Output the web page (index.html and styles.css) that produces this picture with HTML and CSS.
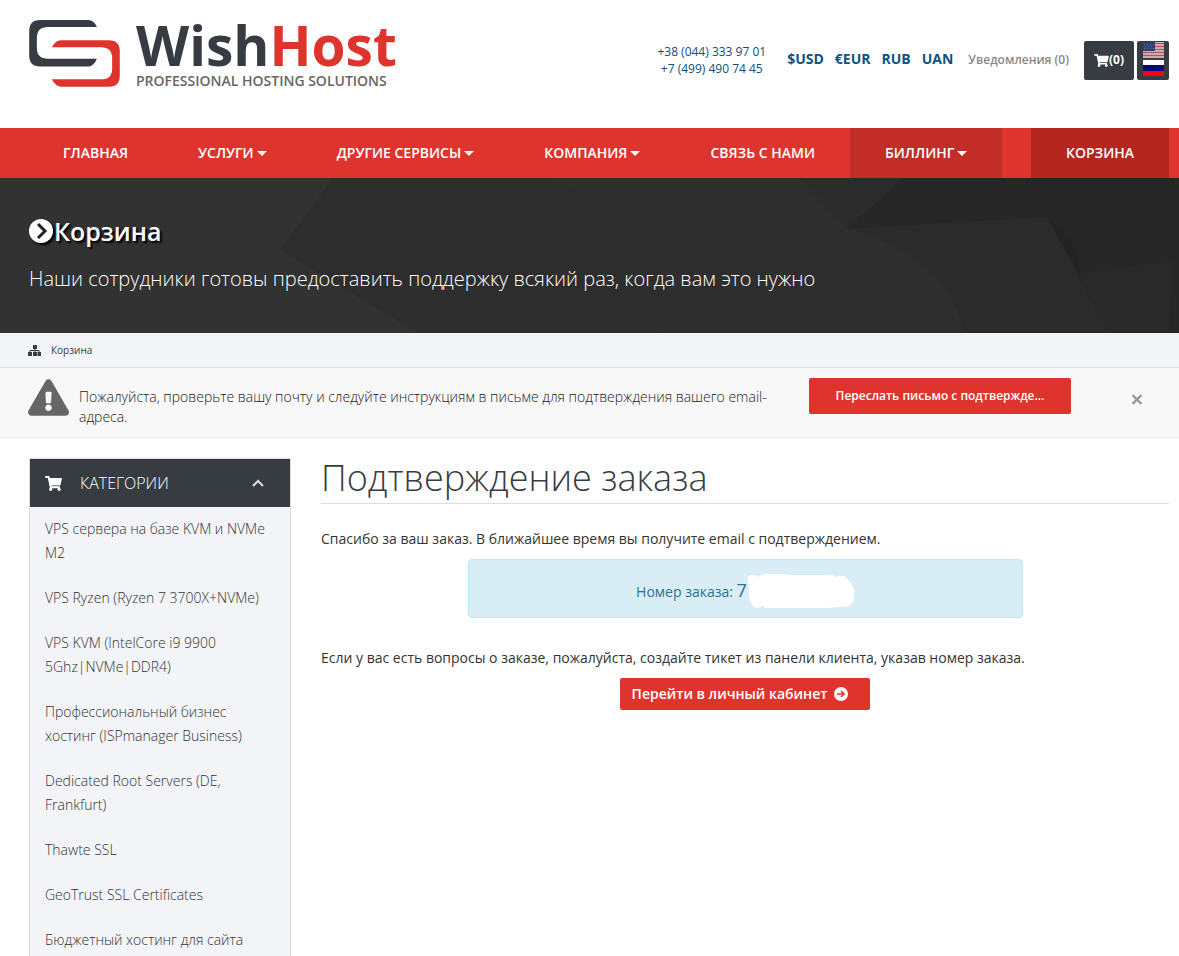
FILE: index.html
```
<!DOCTYPE html>
<html lang="ru">
<head>
  <meta charset="UTF-8">
  <meta name="viewport" content="width=device-width, initial-scale=1.0">
  <title>WishHost - Корзина</title>
  <link rel="stylesheet" href="styles.css">
</head>
<body>
  <!-- icons -->
  <svg class="sprite" aria-hidden="true">
    <symbol id="cart" viewBox="0 0 576 512"><path d="M528.12 301.319l47.273-208C578.806 78.301 567.391 64 551.99 64H159.208l-9.166-44.81C147.758 8.021 137.93 0 126.529 0H24C10.745 0 0 10.745 0 24v16c0 13.255 10.745 24 24 24h69.883l70.248 343.435C147.325 417.1 136 435.222 136 456c0 30.928 25.072 56 56 56s56-25.072 56-56c0-15.674-6.447-29.835-16.824-40h209.647C430.447 426.165 424 440.326 424 456c0 30.928 25.072 56 56 56s56-25.072 56-56c0-22.172-12.888-41.332-31.579-50.405l5.517-24.276c3.413-15.018-8.002-29.319-23.403-29.319H218.117l-6.545-32h293.145c11.206 0 20.92-7.754 23.403-18.681z"/></symbol>
  </svg>

  <header class="header">
    <a class="logo" href="#">
      <svg class="logo-mark" viewBox="27 30 273 202" aria-hidden="true">
        <path fill="#373b42" d="M231 51Q222 30 205 30H60Q27 30 27 63V137Q27 170 60 170H205Q222 170 231 147H83Q50 147 50 114V84Q50 51 83 51Z"/>
        <path fill="#df342d" d="M95 112Q107 91 122 91H267Q300 91 300 124V198Q300 231 267 231H122Q107 231 95 209H244Q277 209 277 176V145Q277 112 244 112Z"/>
      </svg>
      <span class="logo-text">
        <span class="logo-name">Wish<span class="logo-host">Host</span></span>
        <span class="logo-slogan">PROFESSIONAL HOSTING SOLUTIONS</span>
      </span>
    </a>
    <div class="phones">
      <a href="tel:+380443339701">+38 (044) 333 97 01</a>
      <a href="tel:+74994907445">+7 (499) 490 74 45</a>
    </div>
    <div class="currency">
      <a href="#">$USD</a>
      <a href="#">€EUR</a>
      <a href="#">RUB</a>
      <a href="#">UAN</a>
    </div>
    <a class="notices" href="#">Уведомления (0)</a>
    <div class="tools">
      <a class="tool cart-btn" href="#"><svg class="cart-icon" aria-hidden="true"><use href="#cart"/></svg>(0)</a>
      <div class="tool langs">
        <a href="#" aria-label="English">
          <svg class="flag" viewBox="0 0 21 16" aria-hidden="true">
            <path fill="#c9aeb1" d="M0 0h21v16H0z"/>
            <path stroke="#b5525c" d="M0 1.500h21M0 4.500h21M0 7.500h21M0 10.500h21M0 13.500h21"/>
            <path fill="#2c4270" d="M0 0h12v9H0z"/>
            <path stroke="#64759c" stroke-dasharray="1 2" d="M1 2.500h10M2 4.500h9M1 6.500h10"/>
          </svg>
        </a>
        <a href="#" aria-label="Русский">
          <svg class="flag" viewBox="0 0 21 16" aria-hidden="true">
            <path fill="#fff" d="M0 0h21v5H0z"/>
            <path fill="#000c7e" d="M0 5h21v6H0z"/>
            <path fill="#fd0012" d="M0 11h21v5H0z"/>
          </svg>
        </a>
      </div>
    </div>
  </header>

  <nav class="nav">
    <a href="#">ГЛАВНАЯ</a>
    <a class="drop" href="#">УСЛУГИ</a>
    <a class="drop" href="#">ДРУГИЕ СЕРВИСЫ</a>
    <a class="drop" href="#">КОМПАНИЯ</a>
    <a href="#">СВЯЗЬ С НАМИ</a>
    <a class="drop billing" href="#">БИЛЛИНГ</a>
    <a class="basket" href="#">КОРЗИНА</a>
  </nav>

  <section class="banner">
    <svg class="banner-bg" viewBox="0 0 1179 155" preserveAspectRatio="none" aria-hidden="true">
      <path fill="#2d2d2d" d="M333 0L280 72L418 155H661L590 28L582 14L549 0Z"/>
      <path fill="#2e2e2e" d="M549 0L582 14L590 28L661 155H964Q950 80 846 51L800 0Z"/>
      <path fill="#2b2b2b" d="M800 0L846 51L904 0Z"/>
      <path fill="#2b2b2b" d="M846 51Q950 80 964 155H1109L1047 39Z"/>
      <path fill="#262626" d="M904 0L846 51L1047 39L1109 155H1179V0Z"/>
      <path fill="#232323" d="M1047 39Q1082 68 1079 95Z"/>
      <path fill="#292929" d="M1079 95L1171 83L1169 155H1109Z"/>
    </svg>
    <h2 class="banner-title">
      <svg class="banner-icon" viewBox="0 0 24 24" aria-hidden="true">
        <circle cx="12" cy="12" r="12" fill="#fff"/>
        <path d="M9 5l7 7-7 7" fill="none" stroke="#222" stroke-width="3"/>
      </svg>Корзина
    </h2>
    <p class="banner-text">Наши сотрудники готовы предоставить поддержку всякий раз, когда вам это нужно</p>
  </section>

  <div class="crumbs">
    <svg class="sitemap" viewBox="0 0 13 11" aria-hidden="true">
      <path fill="#373b42" d="M5 0h4v4H5zM0 7h4v4H0zM5 7h4v4H5zM9.500 7h3.500v4H9.500z"/>
      <path fill="none" stroke="#373b42" d="M2 7V5.500h9V7M7 3v5"/>
    </svg>
    <a href="#">Корзина</a>
  </div>

  <div class="verify">
    <svg class="warn" viewBox="0 0 576 512" aria-hidden="true"><path fill="#666" d="M569.517 440.013C587.975 472.007 564.806 512 527.94 512H48.054c-36.937 0-59.999-40.055-41.577-71.987L246.423 23.985c18.467-32.009 64.72-31.951 83.154 0l239.94 416.028zM288 354c-25.405 0-46 20.595-46 46s20.595 46 46 46 46-20.595 46-46-20.595-46-46-46zm-43.673-165.346l7.418 136c.347 6.364 5.609 11.346 11.982 11.346h48.546c6.373 0 11.635-4.982 11.982-11.346l7.418-136c.375-6.874-5.098-12.654-11.982-12.654h-57.383c-6.884 0-12.356 5.78-11.981 12.654z"/></svg>
    <p class="verify-text">Пожалуйста, проверьте вашу почту и следуйте инструкциям в письме для подтверждения вашего email-адреса.</p>
    <button class="resend" type="button">Переслать письмо с подтвержде...</button>
    <button class="close" type="button" aria-label="Закрыть">
      <svg viewBox="0 0 10 10" aria-hidden="true"><path d="M1 1l8 8M9 1l-8 8" stroke="#999" stroke-width="2"/></svg>
    </button>
  </div>

  <div class="content">
    <aside class="sidebar">
      <h3 class="sidebar-head">
        <svg class="sidebar-cart" aria-hidden="true"><use href="#cart"/></svg>
        КАТЕГОРИИ
        <svg class="chevron" viewBox="0 0 12 8" aria-hidden="true"><path d="M1 7l5-5 5 5" fill="none" stroke="#ddd" stroke-width="2"/></svg>
      </h3>
      <ul class="cats">
        <li><a href="#">VPS сервера на базе KVM и NVMe M2</a></li>
        <li><a href="#">VPS Ryzen (Ryzen 7 3700X+NVMe)</a></li>
        <li><a href="#">VPS KVM (IntelCore i9 9900 5Ghz|NVMe|DDR4)</a></li>
        <li><a href="#">Профессиональный бизнес хостинг (ISPmanager Business)</a></li>
        <li><a href="#">Dedicated Root Servers (DE, Frankfurt)</a></li>
        <li><a href="#">Thawte SSL</a></li>
        <li><a href="#">GeoTrust SSL Certificates</a></li>
        <li><a href="#">Бюджетный хостинг для сайта</a></li>
      </ul>
    </aside>

    <main class="main">
      <h1>Подтверждение заказа</h1>
      <p>Спасибо за ваш заказ. В ближайшее время вы получите email с подтверждением.</p>
      <div class="order">
        <span>Номер заказа: <span class="order-num">7</span></span>
        <svg class="blot" viewBox="0 0 107 34" aria-hidden="true"><path fill="#fff" d="M1 8Q-1 2 5 1Q9 1 12 3Q14 0 18 0H36L42 1H82Q87 1 90 3Q96 0 100 4Q103 8 107 15V24Q106 34 93 33L80 34H18L16 32Q8 37 4 29Q2 26 2 17Z"/></svg>
      </div>
      <p>Если у вас есть вопросы о заказе, пожалуйста, создайте тикет из панели клиента, указав номер заказа.</p>
      <a class="cabinet" href="#">Перейти в личный кабинет
        <svg class="arrow" viewBox="0 0 14 14" aria-hidden="true">
          <circle cx="7" cy="7" r="7" fill="#fff"/>
          <path d="M3 7h7M7 4l3 3-3 3" fill="none" stroke="#df342d" stroke-width="1.500"/>
        </svg>
      </a>
    </main>
  </div>
</body>
</html>
```
FILE: styles.css
```
*{
	box-sizing: border-box;
}
body{
	margin: 0;
	font: 14px/24px "Open Sans", "Noto Sans", sans-serif;
	color: #373b42;
	background-color: #fff;
	height: 100vh;
	overflow: hidden;
}
a{
	color: inherit;
	text-decoration: none;
}
svg{
	display: block;
	flex-shrink: 0;
}
.sprite{
	position: absolute;
	width: 0;
	height: 0;
}

/* header */
.header{
	display: flex;
	align-items: center;
	height: 128px;
	padding: 0 10px 8px 29px;
}
.logo{
	display: flex;
	gap: 16px;
	margin-right: auto;
	padding-bottom: 12px;
}
.logo-mark{
	width: 91px;
	height: 67px;
}
.logo-text{
	display: flex;
	flex-direction: column;
}
.logo-name{
	font-size: 55px;
	font-weight: 700;
	line-height: 50px;
}
.logo-host{
	color: #df342d;
}
.logo-slogan{
	margin-top: 4px;
	font-size: 14px;
	font-weight: 600;
	line-height: 14px;
	color: #666;
}
.phones{
	display: flex;
	flex-direction: column;
	align-items: center;
	margin-right: 21px;
	font-size: 12px;
	line-height: 17px;
	color: #0d4f80;
}
.currency{
	display: flex;
	gap: 11px;
	margin-right: 15px;
	padding-bottom: 2px;
	font-weight: 700;
	color: #0d5384;
}
.notices{
	margin-right: 15px;
	font-size: 12px;
	font-weight: 600;
	color: #888;
}
.tools{
	display: flex;
	gap: 3px;
}
.tool{
	height: 39px;
	background-color: #373b42;
	border-radius: 2px;
}
.cart-btn{
	display: flex;
	align-items: center;
	padding: 0 10px;
	font-size: 12px;
	font-weight: 700;
	color: #fff;
}
.cart-icon{
	width: 15px;
	height: 13px;
	fill: #fff;
}
.langs{
	display: flex;
	flex-direction: column;
	gap: 2px;
	padding: 1px 5px 1px 6px;
}
.flag{
	width: 21px;
	height: 16px;
}

/* menu */
.nav{
	display: flex;
	height: 50px;
	padding: 0 10px 0 28px;
	background-color: #df342d;
}
.nav a{
	display: flex;
	align-items: center;
	padding: 0 35px;
	font-weight: 600;
	color: #fff;
	white-space: nowrap;
}
.drop::after{
	content: "";
	margin-left: 3px;
	border: 5px solid transparent;
	border-top-color: #fff;
	border-bottom: 0;
}
.nav .billing{
	background-color: #c22d27;
}
.nav .basket{
	margin-left: auto;
	background-color: #b5261f;
}

/* banner */
.banner{
	position: relative;
	height: 155px;
	padding: 37px 29px 0;
	color: #fff;
	background-color: #323232;
}
.banner-bg{
	position: absolute;
	top: 0;
	left: 0;
	width: 100%;
	height: 100%;
}
.banner-title{
	position: relative;
	display: flex;
	align-items: center;
	gap: 1px;
	margin: 0 0 17px;
	font-size: 25px;
	font-weight: 600;
	line-height: 32px;
	text-shadow: 2px 2px 2px #000;
}
.banner-icon{
	width: 24px;
	height: 24px;
	filter: drop-shadow(2px 2px 1px #000);
}
.banner-text{
	position: relative;
	margin: 0;
	font-size: 20px;
	font-weight: 300;
	line-height: 30px;
}

.crumbs{
	display: flex;
	align-items: center;
	gap: 10px;
	height: 35px;
	padding: 0 28px;
	font-size: 10px;
	background-color: #f2f4f7;
	border-bottom: 1px solid #e0e0e0;
}
.sitemap{
	width: 13px;
	height: 11px;
}
.verify{
	display: flex;
	align-items: flex-start;
	padding: 10px 36px 10px 28px;
	background-color: #f8f8f8;
	border-bottom: 1px solid #ececec;
}
.warn{
	width: 41px;
	height: 37px;
	margin-top: 1px;
}
.verify-text{
	flex: 1;
	margin: 9px 40px 0 10px;
	font-weight: 300;
	line-height: 20px;
	color: #222;
}
.resend{
	width: 262px;
	height: 36px;
	padding: 0 12px;
	border: 0;
	border-radius: 2px;
	background-color: #df342d;
	color: #fff;
	font: 600 12px/20px "Open Sans", "Noto Sans", sans-serif;
}
.close{
	margin: 16px 0 0 60px;
	padding: 0;
	border: 0;
	background: none;
}
.close svg{
	width: 12px;
	height: 11px;
}

/* content */
.content{
	display: grid;
	grid-template-columns: 262px 1fr;
	gap: 30px;
	padding: 20px 10px 0 29px;
}
.sidebar{
	background-color: #f2f4f7;
	border: 1px solid #ddd;
	border-radius: 2px;
}
.sidebar-head{
	display: flex;
	align-items: center;
	height: 48px;
	margin: 0;
	padding: 0 26px 0 15px;
	font-size: 16px;
	font-weight: 300;
	color: #fff;
	background-color: #373b42;
}
.sidebar-cart{
	width: 17px;
	height: 15px;
	margin-right: 18px;
	fill: #fff;
}
.chevron{
	width: 12px;
	height: 8px;
	margin-left: auto;
}
.cats{
	margin: 0;
	padding: 0;
	list-style: none;
	font-weight: 300;
	color: #333;
}
.cats a{
	display: block;
	padding: 10px 15px 11px;
}
.main{
	display: flex;
	flex-direction: column;
}
.main h1{
	margin: 0 0 23px;
	padding-bottom: 6px;
	font-size: 36px;
	font-weight: 300;
	line-height: 39px;
	border-bottom: 1px solid #ddd;
}
.main p{
	margin: 0;
	color: #333;
}
.order{
	display: flex;
	align-items: center;
	justify-content: center;
	align-self: center;
	width: 100%;
	max-width: 555px;
	height: 59px;
	margin: 8px 0 28px;
	padding-top: 4px;
	color: #31708f;
	background-color: #d9edf7;
	border: 1px solid #bce8f1;
	border-radius: 4px;
}
.order-num{
	font-size: 18px;
}
.blot{
	width: 107px;
	height: 34px;
}
.cabinet{
	display: flex;
	align-items: center;
	align-self: center;
	gap: 7px;
	height: 32px;
	margin-top: 8px;
	padding: 0 22px 0 12px;
	border-radius: 2px;
	font-weight: 600;
	color: #fff;
	background-color: #df342d;
}
.arrow{
	width: 14px;
	height: 14px;
}
```
